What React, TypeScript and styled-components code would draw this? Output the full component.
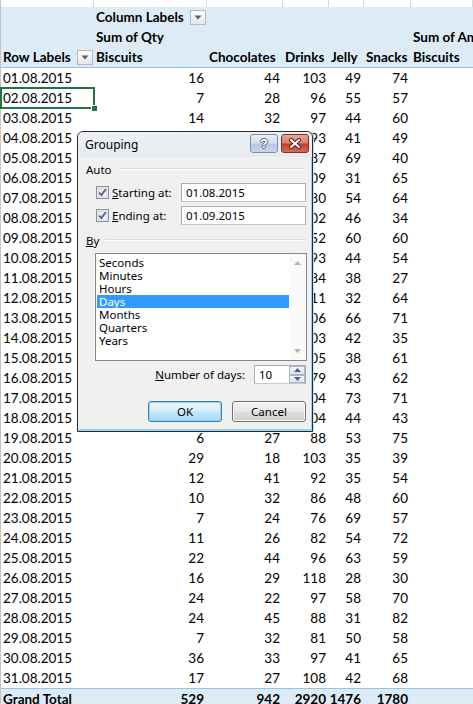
import React from "react";
import styled, { createGlobalStyle, css } from "styled-components";

const GlobalStyle = createGlobalStyle`
  html, body { margin: 0; padding: 0; background: #ffffff; overflow: hidden; }
  #root { width: 473px; height: 704px; }
`;

const COLS = "93px 113px 76px 46px 35px 47px 1fr";

type Val = number | null;
type Rec = [string, Val, Val, Val, Val, Val];

/* values under the Grouping dialog are not visible in the source and left blank */
const DATA: Rec[] = [
  ["01.08.2015", 16, 44, 103, 49, 74],
  ["02.08.2015", 7, 28, 96, 55, 57],
  ["03.08.2015", 14, 32, 97, 44, 60],
  ["04.08.2015", null, null, 93, 41, 49],
  ["05.08.2015", null, null, 87, 69, 40],
  ["06.08.2015", null, null, 109, 31, 65],
  ["07.08.2015", null, null, 80, 54, 64],
  ["08.08.2015", null, null, 102, 46, 34],
  ["09.08.2015", null, null, 52, 60, 60],
  ["10.08.2015", null, null, 93, 44, 54],
  ["11.08.2015", null, null, 84, 38, 27],
  ["12.08.2015", null, null, 111, 32, 64],
  ["13.08.2015", null, null, 106, 66, 71],
  ["14.08.2015", null, null, 103, 42, 35],
  ["15.08.2015", null, null, 105, 38, 61],
  ["16.08.2015", null, null, 79, 43, 62],
  ["17.08.2015", null, null, 104, 73, 71],
  ["18.08.2015", null, null, 104, 44, 43],
  ["19.08.2015", 6, 27, 88, 53, 75],
  ["20.08.2015", 29, 18, 103, 35, 39],
  ["21.08.2015", 12, 41, 92, 35, 54],
  ["22.08.2015", 10, 32, 86, 48, 60],
  ["23.08.2015", 7, 24, 76, 69, 57],
  ["24.08.2015", 11, 26, 82, 54, 72],
  ["25.08.2015", 22, 44, 96, 63, 59],
  ["26.08.2015", 16, 29, 118, 28, 30],
  ["27.08.2015", 24, 22, 97, 58, 70],
  ["28.08.2015", 24, 45, 88, 31, 82],
  ["29.08.2015", 7, 32, 81, 50, 58],
  ["30.08.2015", 36, 33, 97, 41, 65],
  ["31.08.2015", 17, 27, 108, 42, 68],
];

const Page = styled.div`
  position: relative;
  width: 473px;
  height: 704px;
  overflow: hidden;
  background: #ffffff;
  font-family: Lato, "Open Sans", sans-serif;
  font-size: 13.5px;
  color: #000000;
`;

const Sheet = styled.div`
  border-left: 1px solid #c4c4c4;
`;

const Strip = styled.div`
  display: grid;
  grid-template-columns: ${COLS};
  height: 7px;
`;

const StripCell = styled.div`
  border-right: 1px solid #d9d9d9;
`;

const Header = styled.div`
  background: #ddebf7;
  border-bottom: 1px solid #9bc2e6;
`;

const Row = styled.div<{ $total?: boolean }>`
  display: grid;
  grid-template-columns: ${COLS};
  height: 20px;
  ${(p) =>
    p.$total &&
    css`
      background: #ddebf7;
      border-top: 1px solid #9bc2e6;
      font-weight: 700;
    `}
`;

const Cell = styled.div<{ $num?: boolean; $bold?: boolean; $selected?: boolean }>`
  position: relative;
  display: flex;
  align-items: center;
  justify-content: ${(p) => (p.$num ? "flex-end" : "space-between")};
  padding: ${(p) => (p.$num ? "0 3px 0 2px" : "0 1px 0 2px")};
  white-space: nowrap;
  font-weight: ${(p) => (p.$bold ? 700 : "inherit")};
  line-height: 20px;
  ${(p) =>
    p.$selected &&
    css`
      &::after {
        content: "";
        position: absolute;
        left: -1px;
        top: -1px;
        right: -1px;
        bottom: -1px;
        border: 2px solid #217346;
        pointer-events: none;
      }
      &::before {
        content: "";
        position: absolute;
        right: -4px;
        bottom: -4px;
        width: 5px;
        height: 5px;
        background: #217346;
        border: 1px solid #ffffff;
        z-index: 1;
      }
    `}
`;

const FilterBtn = styled.span`
  box-sizing: border-box;
  width: 16px;
  height: 15px;
  border: 1px solid #b9b9b9;
  background: linear-gradient(#fdfdfd, #e6e6e6);
  display: inline-flex;
  align-items: center;
  justify-content: center;
  flex: none;
`;

const FilterIcon = () => (
  <svg width="8" height="5" viewBox="0 0 8 5">
    <path d="M0.5 0.5 L7.5 0.5 L4 4.5 Z" fill="#606060" />
  </svg>
);

/* ---------- dialog ---------- */

const Dialog = styled.div`
  position: absolute;
  left: 77px;
  top: 131px;
  width: 236px;
  height: 301px;
  box-sizing: border-box;
  border: 1px solid #2a2a2a;
  border-radius: 6px 6px 0 0;
  background: #f0f0f0;
  box-shadow: inset -1px -2px 0 #8fd6f3, 1px 0 0 #bfe0f2;
  font-family: "Noto Sans", "Liberation Sans", sans-serif;
  font-size: 11.5px;
  color: #000000;
  display: flex;
  flex-direction: column;
  overflow: hidden;
`;

const TitleBar = styled.div`
  height: 25px;
  display: flex;
  align-items: flex-start;
  justify-content: space-between;
  padding: 0 3px 0 7px;
  background: linear-gradient(#edf1f6, #e6ebf1);
  border-radius: 5px 5px 0 0;
`;

const Title = styled.span`
  font-size: 12px;
  line-height: 26px;
`;

const TitleButtons = styled.div`
  display: flex;
  gap: 3px;
  margin-top: 2px;
`;

const CaptionBtn = styled.span<{ $close?: boolean }>`
  box-sizing: border-box;
  width: 28px;
  height: 19px;
  border-radius: 3px;
  display: inline-flex;
  align-items: center;
  justify-content: center;
  border: 1px solid ${(p) => (p.$close ? "#7c3026" : "#7f8ea3")};
  background: ${(p) =>
    p.$close
      ? "linear-gradient(#e8a79b 0%, #d9806f 45%, #c3422e 55%, #d56a55 100%)"
      : "linear-gradient(#e9eff7 0%, #d2deec 45%, #b8c9de 55%, #c9d7e8 100%)"};
`;

const HelpGlyph = styled.span`
  font-family: "Liberation Sans", sans-serif;
  font-weight: 700;
  font-size: 13px;
  color: #ffffff;
  text-shadow: 1px 0 0 #58677c, -1px 0 0 #58677c, 0 1px 0 #58677c, 0 -1px 0 #58677c;
  line-height: 1;
`;

const CloseIcon = () => (
  <svg width="14" height="11" viewBox="0 0 14 11">
    <path d="M3 2 L11 9 M11 2 L3 9" stroke="#4a1c16" strokeWidth="4" strokeLinecap="round" />
    <path d="M3 2 L11 9 M11 2 L3 9" stroke="#ffffff" strokeWidth="2.2" strokeLinecap="round" />
  </svg>
);

const Body = styled.div`
  flex: 1;
  display: flex;
  flex-direction: column;
  padding: 0 6px 0 8px;
`;

const GroupHead = styled.div<{ $gap: number }>`
  height: 16px;
  margin-top: ${(p) => p.$gap}px;
  display: flex;
  align-items: center;
  gap: 6px;
  &::after {
    content: "";
    flex: 1;
    height: 0;
    border-top: 1px solid #d5dfe5;
    border-bottom: 1px solid #ffffff;
  }
`;

const OptionRow = styled.div<{ $gap: number }>`
  height: 19px;
  margin-top: ${(p) => p.$gap}px;
  padding-left: 10px;
  display: flex;
  align-items: center;
`;

const OptionLabel = styled.label`
  width: 69px;
  margin-left: 3px;
  flex: none;
`;

const TextBox = styled.div<{ $w: number }>`
  box-sizing: border-box;
  width: ${(p) => p.$w}px;
  height: 19px;
  border: 1px solid #abadb3;
  border-bottom-color: #c5cad2;
  background: #ffffff;
  padding-left: 4px;
  display: flex;
  align-items: center;
  position: relative;
`;

const CheckBox = () => (
  <svg width="13" height="13" viewBox="0 0 13 13">
    <defs>
      <linearGradient id="cbg" x1="0" y1="0" x2="1" y2="1">
        <stop offset="0" stopColor="#dfe3e8" />
        <stop offset="1" stopColor="#fbfbfb" />
      </linearGradient>
    </defs>
    <rect x="0.5" y="0.5" width="12" height="12" fill="#f6f6f6" stroke="#8e8f8f" />
    <rect x="2" y="2" width="9" height="9" fill="url(#cbg)" stroke="#b9bfc8" strokeWidth="0.6" />
    <path d="M3.2 6.6 L5.4 9 L9.8 3.2" stroke="#4b5f93" strokeWidth="1.8" fill="none" />
  </svg>
);

const ListBox = styled.div`
  box-sizing: border-box;
  width: 212px;
  height: 108px;
  margin: 5px 0 0 9px;
  border: 1px solid #828790;
  background: #ffffff;
  display: flex;
`;

const ListItems = styled.div`
  flex: 1;
  padding: 2px 0 0 1px;
`;

const ListItem = styled.div<{ $sel?: boolean }>`
  height: 13px;
  line-height: 13px;
  padding-left: 2px;
  background: ${(p) => (p.$sel ? "#3399ff" : "transparent")};
  color: ${(p) => (p.$sel ? "#ffffff" : "#000000")};
`;

const ScrollBar = styled.div`
  width: 17px;
  background: #fafafa;
  display: flex;
  flex-direction: column;
  justify-content: space-between;
  align-items: center;
  padding: 7px 0 7px;
`;

const Tri = ({ up, color }: { up?: boolean; color: string }) => (
  <svg width="7" height="4" viewBox="0 0 7 4">
    <path d={up ? "M0 4 L7 4 L3.5 0 Z" : "M0 0 L7 0 L3.5 4 Z"} fill={color} />
  </svg>
);

const NumberRow = styled.div`
  height: 19px;
  margin-top: 4px;
  display: flex;
  align-items: center;
  justify-content: flex-end;
  gap: 9px;
`;

const Spin = styled.div`
  position: absolute;
  right: 0;
  top: 0;
  bottom: 0;
  width: 16px;
  display: flex;
  flex-direction: column;
`;

const SpinBtn = styled.span`
  flex: 1;
  box-sizing: border-box;
  border: 1px solid #aab6c6;
  background: linear-gradient(#f3f7fb, #d9e3ee);
  display: flex;
  align-items: center;
  justify-content: center;
`;

const ButtonRow = styled.div`
  margin-top: 17px;
  display: flex;
  justify-content: flex-end;
  gap: 10px;
`;

const PushButton = styled.span<{ $default?: boolean }>`
  box-sizing: border-box;
  width: 74px;
  height: 21px;
  border-radius: 3px;
  display: flex;
  align-items: center;
  justify-content: center;
  border: 1px solid ${(p) => (p.$default ? "#3c7fb1" : "#707070")};
  background: ${(p) =>
    p.$default
      ? "linear-gradient(#eaf6fd 0%, #d9f0fc 45%, #bee6fd 55%, #a7d9f5 100%)"
      : "linear-gradient(#f2f2f2 0%, #ebebeb 45%, #dddddd 55%, #cfcfcf 100%)"};
  box-shadow: ${(p) => (p.$default ? "inset 0 0 0 1px #98d1ef" : "inset 0 0 0 1px #fcfcfc")};
`;

const Mn = styled.u``;

const HEAD_COLS = ["Biscuits", "Chocolates", "Drinks", "Jelly", "Snacks", "Biscuits"];

export default function App() {
  const totals = [529, 942, 2920, 1476, 1780];
  return (
    <Page>
      <GlobalStyle />
      <Sheet>
        <Strip>
          {Array.from({ length: 7 }).map((_, i) => (
            <StripCell key={i} />
          ))}
        </Strip>
        <Header>
          <Row>
            <Cell />
            <Cell $bold>
              <span>Column Labels</span>
              <FilterBtn>
                <FilterIcon />
              </FilterBtn>
            </Cell>
          </Row>
          <Row>
            <Cell />
            <Cell $bold>Sum of Qty</Cell>
            <Cell />
            <Cell />
            <Cell />
            <Cell />
            <Cell $bold>Sum of Amount</Cell>
          </Row>
          <Row>
            <Cell $bold>
              <span>Row Labels</span>
              <FilterBtn>
                <FilterIcon />
              </FilterBtn>
            </Cell>
            {HEAD_COLS.map((h, i) => (
              <Cell key={i} $bold>
                {h}
              </Cell>
            ))}
          </Row>
        </Header>
        {DATA.map((r, i) => (
          <Row key={r[0]}>
            <Cell $selected={i === 1}>{r[0]}</Cell>
            {r.slice(1).map((v, j) => (
              <Cell key={j} $num>
                {v ?? ""}
              </Cell>
            ))}
            <Cell />
          </Row>
        ))}
        <Row $total>
          <Cell>Grand Total</Cell>
          {totals.map((v, j) => (
            <Cell key={j} $num>
              {v}
            </Cell>
          ))}
          <Cell />
        </Row>
      </Sheet>

      <Dialog>
        <TitleBar>
          <Title>Grouping</Title>
          <TitleButtons>
            <CaptionBtn>
              <HelpGlyph>?</HelpGlyph>
            </CaptionBtn>
            <CaptionBtn $close>
              <CloseIcon />
            </CaptionBtn>
          </TitleButtons>
        </TitleBar>
        <Body>
          <GroupHead $gap={4}>Auto</GroupHead>
          <OptionRow $gap={6}>
            <CheckBox />
            <OptionLabel>
              <Mn>S</Mn>tarting at:
            </OptionLabel>
            <TextBox $w={125}>01.08.2015</TextBox>
          </OptionRow>
          <OptionRow $gap={4}>
            <CheckBox />
            <OptionLabel>
              <Mn>E</Mn>nding at:
            </OptionLabel>
            <TextBox $w={125}>01.09.2015</TextBox>
          </OptionRow>
          <GroupHead $gap={7}>
            <span>
              <Mn>B</Mn>y
            </span>
          </GroupHead>
          <ListBox>
            <ListItems>
              {["Seconds", "Minutes", "Hours", "Days", "Months", "Quarters", "Years"].map((t) => (
                <ListItem key={t} $sel={t === "Days"}>
                  {t}
                </ListItem>
              ))}
            </ListItems>
            <ScrollBar>
              <Tri up color="#b4b4b4" />
              <Tri color="#b4b4b4" />
            </ScrollBar>
          </ListBox>
          <NumberRow>
            <span>
              <Mn>N</Mn>umber of days:
            </span>
            <TextBox $w={52}>
              10
              <Spin>
                <SpinBtn>
                  <Tri up color="#4d6185" />
                </SpinBtn>
                <SpinBtn>
                  <Tri color="#4d6185" />
                </SpinBtn>
              </Spin>
            </TextBox>
          </NumberRow>
          <ButtonRow>
            <PushButton $default>OK</PushButton>
            <PushButton>Cancel</PushButton>
          </ButtonRow>
        </Body>
      </Dialog>
    </Page>
  );
}
